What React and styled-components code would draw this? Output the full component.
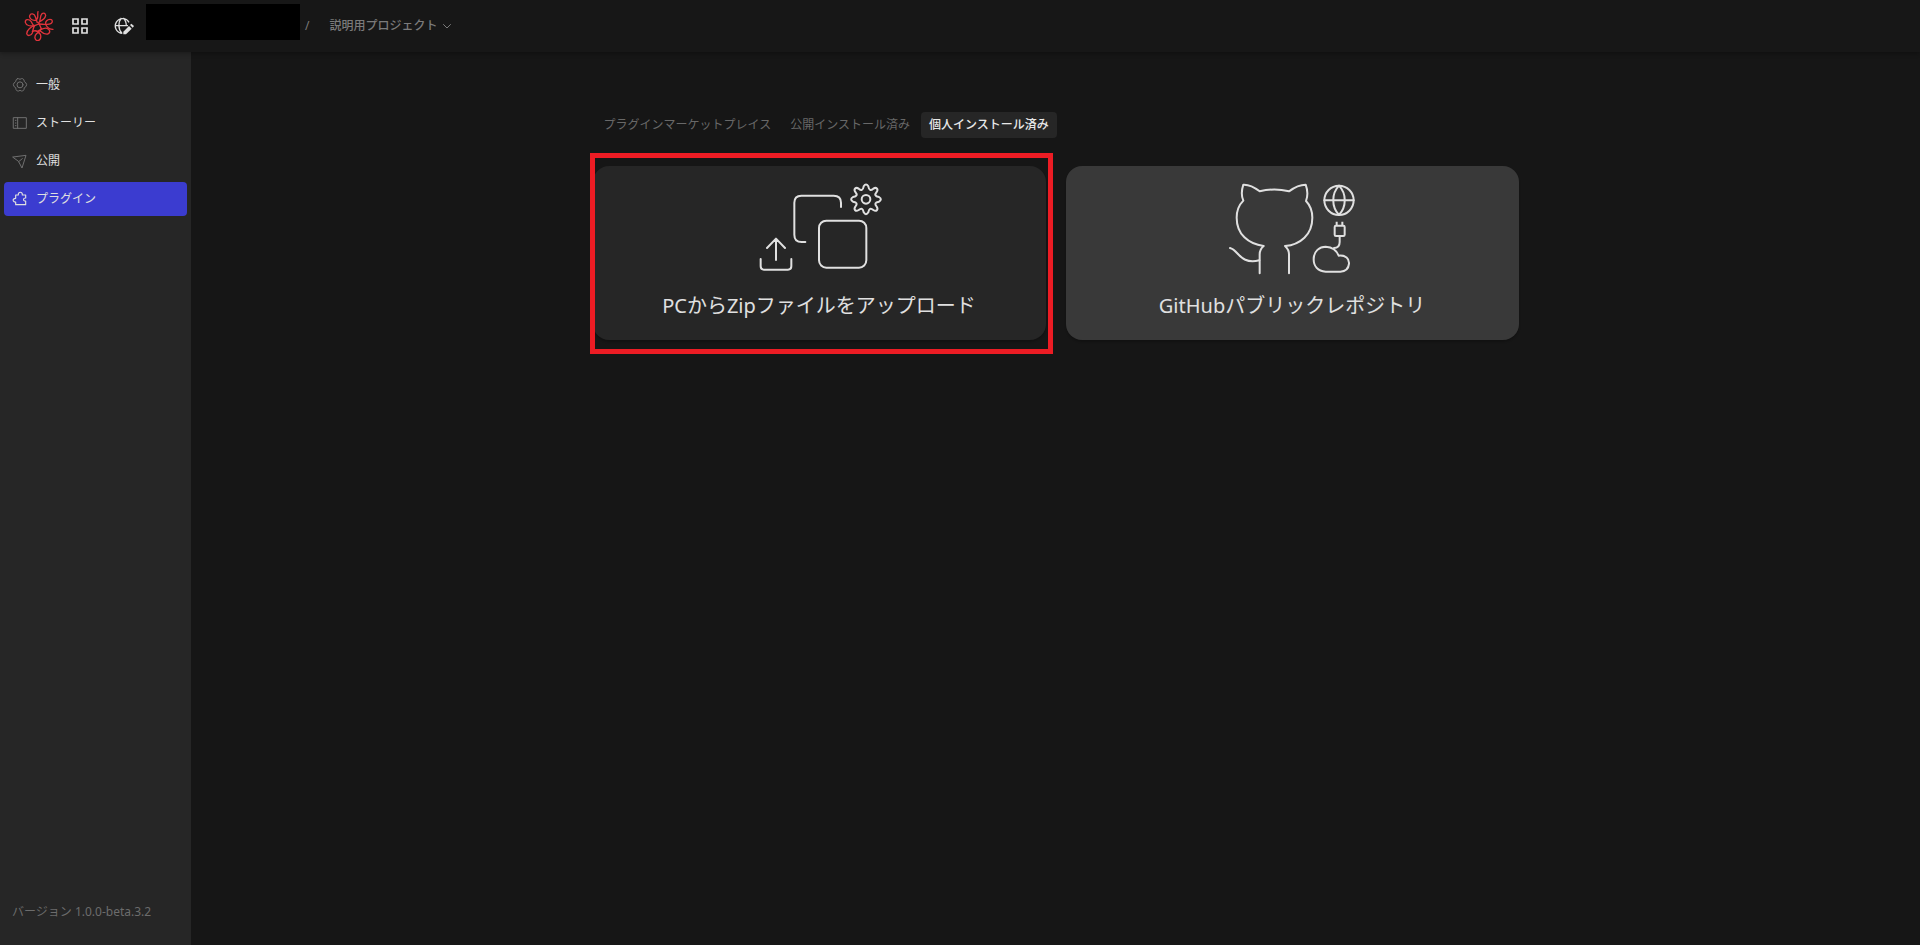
import React from "react";
import styled, { createGlobalStyle } from "styled-components";

const GlobalStyle = createGlobalStyle`
  *, *::before, *::after { box-sizing: border-box; }
  body {
    margin: 0;
    background: #161616;
    color: #e0e0e0;
    font-family: "Noto Sans", "Noto Sans CJK JP", sans-serif;
    font-size: 12px;
    line-height: 18px;
  }
  button { font: inherit; color: inherit; border: 0; background: none; padding: 0; cursor: pointer; }
  a { color: inherit; text-decoration: none; }
  svg { display: block; flex: none; }
`;

const Page = styled.div`
  min-height: 100vh;
  display: flex;
  flex-direction: column;
`;

const Header = styled.header`
  position: relative;
  z-index: 1;
  height: 52px;
  flex: none;
  display: flex;
  align-items: flex-start;
  padding-left: 24px;
  background: #171717;
  box-shadow: 0 2px 4px rgba(0, 0, 0, 0.25);
`;

const HeaderLink = styled.a`
  height: 52px;
  display: flex;
  align-items: center;
  margin-right: ${(p) => p.$gap}px;
`;

const Workspace = styled.div`
  width: 154px;
  height: 36px;
  margin-top: 4px;
  background: #000;
`;

const Crumbs = styled.nav`
  height: 52px;
  display: flex;
  align-items: center;
  gap: 20px;
  padding-left: 5px;
  color: #7b7b7b;
`;

const ProjectButton = styled.button`
  display: flex;
  align-items: center;
  gap: 5px;
  font-weight: 500;
`;

const Body = styled.div`
  flex: 1;
  display: flex;
`;

const Sidebar = styled.aside`
  width: 191px;
  flex: none;
  display: flex;
  flex-direction: column;
  justify-content: space-between;
  padding: 16px 4px 24px;
  background: #262626;
`;

const Menu = styled.nav`
  display: flex;
  flex-direction: column;
  gap: 4px;
`;

const MenuItem = styled.a`
  height: 34px;
  display: flex;
  align-items: center;
  gap: 8px;
  padding: 0 8px;
  border-radius: 4px;
  background: ${(p) => (p.$active ? "#3b3cd0" : "transparent")};
  svg { color: ${(p) => (p.$active ? "#e0e0e0" : "#707070")}; }
`;

const Version = styled.div`
  padding-left: 8px;
  color: #6c6c6c;
`;

const Main = styled.main`
  flex: 1;
  padding: 60px 24px;
`;

const Content = styled.div`
  max-width: 926px;
  margin: 0 auto;
  display: flex;
  flex-direction: column;
  gap: 28px;
`;

const Tabs = styled.div`
  display: flex;
  gap: 3px;
  padding-left: 3px;
`;

const Tab = styled.button`
  height: 26px;
  padding: 0 8px;
  border-radius: 4px;
  white-space: nowrap;
  color: ${(p) => (p.$active ? "#e8e8e8" : "#686868")};
  background: ${(p) => (p.$active ? "#262626" : "transparent")};
  font-weight: ${(p) => (p.$active ? 500 : 400)};
`;

const Cards = styled.div`
  display: grid;
  grid-template-columns: 1fr 1fr;
  gap: 20px;
`;

const CardSlot = styled.div`
  position: relative;
  display: grid;
`;

const Highlight = styled.div`
  position: absolute;
  inset: -13px -7px -14px -3px;
  border: 5px solid #ed1c24;
  pointer-events: none;
`;

const Card = styled.button`
  display: flex;
  flex-direction: column;
  align-items: center;
  gap: 16px;
  padding: 16px 16px 20px;
  border-radius: 16px;
  background: ${(p) => (p.$raised ? "#393939" : "#262626")};
  box-shadow: 0 2px 2px rgba(0, 0, 0, 0.2);
`;

const CardTitle = styled.span`
  font-size: 20px;
  line-height: 28px;
`;

const line = { fill: "none", stroke: "currentColor", strokeLinecap: "round", strokeLinejoin: "round" };

const Logo = () => (
  <svg width="30" height="30" viewBox="72 33 90 90" fill="none" stroke="#e0343c" strokeWidth="4" strokeLinecap="round" strokeLinejoin="round">
    <path d="M114 35C111 46 118 58 106 61C96 63 87 54 89 47C92 38 103 41 106 50L112 68" />
    <path d="M116 68C124 62 118 48 126 41C134 36 140 44 135 52C131 60 121 62 116 68L124 86" />
    <path d="M116 72L104 77C91 79 78 76 76 67C75 57 87 57 93 64C98 70 96 76 104 77" />
    <path d="M104 77C93 80 80 91 80 101C82 109 93 108 97 99C99 93 98 86 104 77" />
    <path d="M97 94C107 90 116 95 121 103C125 114 119 122 113 122C104 121 102 109 109 102C113 98 117 96 124 86" />
    <path d="M121 93C126 98 134 103 143 102C152 99 151 88 141 85C132 82 121 90 114 93" />
    <path d="M116 72C126 72 132 74 141 73C149 73 157 71 157 63C156 56 145 57 140 62C132 70 141 88 159 88" />
  </svg>
);

const GridIcon = () => (
  <svg width="16" height="16" viewBox="0 0 16 16" fill="none" stroke="#e0e0e0" strokeWidth="1.7">
    <path d="M1 1h5v5H1zM10 1h5v5h-5zM1 10h5v5H1zM10 10h5v5h-5z" />
  </svg>
);

const GlobeEditIcon = () => (
  <svg width="20" height="18" viewBox="342 51 60 54" fill="none" stroke="#e0e0e0" strokeWidth="4">
    <path d="M387 67A22 22 0 1 0 367 100M345 77H384M364 54C354 66 354 88 366 100M370 54Q379 63 379 78" />
    <path d="M370 95L387 78L395 86L378 103H370Z" fill="#e0e0e0" stroke="none" />
    <path d="M390 75L394 71L402 78L398 83Z" fill="#e0e0e0" stroke="none" />
  </svg>
);

const ChevronIcon = () => (
  <svg width="10" height="10" viewBox="0 0 10 10" {...line}>
    <path d="M1.500 3.500L5 7L8.500 3.500" />
  </svg>
);

const GearIcon = () => (
  <svg width="16" height="16" viewBox="0 0 48 48" {...line} strokeWidth="3">
    <path d="M16 5Q20 4 24 7Q28 4 32 5Q37 7 37 14Q43 17 44 23Q43 30 37 32Q37 39 32 42Q28 43 24 40Q20 43 16 42Q11 39 11 32Q5 30 4 23Q5 17 11 14Q11 7 16 5Z" />
    <circle cx="24" cy="23.500" r="9" />
  </svg>
);

const StoryIcon = () => (
  <svg width="16" height="16" viewBox="0 0 48 48" {...line} strokeWidth="3">
    <path d="M5 8H43V40H5ZM17 8V40M10 16H12M10 24H12M10 32H12" />
  </svg>
);

const PublishIcon = () => (
  <svg width="16" height="16" viewBox="0 0 48 48" {...line} strokeWidth="3">
    <path d="M3 12L42 7L30 45L20 26ZM20 26L31 17" />
  </svg>
);

const PluginIcon = () => (
  <svg width="16" height="16" viewBox="0 0 48 48" {...line} strokeWidth="3.500">
    <path d="M11 41V33C2 34 0 22 11 22V12H19C18 1 32 1 31 12H41V21C33 20 32 31 41 30V41Z" />
  </svg>
);

const UploadArt = () => (
  <svg width="126" height="94" viewBox="48 36 378 282" {...line} strokeWidth="6">
    <path d="M303 111V98Q303 77 281 77H184Q163 77 163 98V194Q163 216 185 216H196" />
    <rect x="237" y="152" width="142" height="141" rx="22" />
    <path d="M62 267V289Q62 299 72 299H144Q154 299 154 289V267M108 270V206M81 234L108 206L135 234" />
    <circle cx="378" cy="88" r="13" />
    <path d="M371 49Q378 38 385 49C387 61 392 63 400 56C409 50 416 57 410 66C403 74 405 79 417 81Q428 88 417 95C405 97 403 102 410 110C416 119 409 126 400 120C392 113 387 115 385 127Q378 138 371 127C369 115 364 113 356 120C347 126 340 119 346 110C353 102 351 97 339 95Q328 88 339 81C351 79 353 74 346 66C340 57 347 50 356 56C364 63 369 61 371 49Z" />
  </svg>
);

const GitHubArt = () => (
  <svg width="126" height="94" viewBox="58 36 378 282" {...line} strokeWidth="6">
    <path d="M150 310V253Q150 238 162 228C116 222 81 193 81 143Q81 112 101 92C94 76 96 59 101 44C119 43 136 53 150 64Q194 53 238 64C254 52 270 44 288 44C294 60 295 77 289 93Q308 113 308 143C308 194 272 224 226 228Q238 239 238 253V310" />
    <path d="M61 234C87 240 91 285 149 271" />
    <circle cx="388" cy="91" r="44" />
    <path d="M344 91H432M388 47C365 71 365 111 388 135C411 111 411 71 388 47Z" />
    <path d="M381 155V166M398 155V166" strokeLinecap="butt" />
    <rect x="375" y="167" width="30" height="31" rx="4" />
    <path d="M390 199V216Q390 234 373 234" />
    <path d="M387 257C408 255 419 266 418 281Q416 304 392 305H348C324 303 312 288 312 268C312 243 330 230 348 230C366 231 380 238 387 257Z" />
  </svg>
);

const menuItems = [
  { label: "一般", Icon: GearIcon },
  { label: "ストーリー", Icon: StoryIcon },
  { label: "公開", Icon: PublishIcon },
  { label: "プラグイン", Icon: PluginIcon, active: true },
];

const tabs = ["プラグインマーケットプレイス", "公開インストール済み", "個人インストール済み"];

export default function App() {
  return (
    <Page lang="ja">
      <GlobalStyle />
      <Header>
        <HeaderLink href="#" aria-label="ホーム" $gap={18}><Logo /></HeaderLink>
        <HeaderLink href="#" aria-label="ダッシュボード" $gap={26}><GridIcon /></HeaderLink>
        <HeaderLink href="#" aria-label="エディター" $gap={12}><GlobeEditIcon /></HeaderLink>
        <Workspace />
        <Crumbs>
          <span>/</span>
          <ProjectButton>説明用プロジェクト<ChevronIcon /></ProjectButton>
        </Crumbs>
      </Header>
      <Body>
        <Sidebar>
          <Menu>
            {menuItems.map(({ label, Icon, active }) => (
              <MenuItem key={label} href="#" $active={active}>
                <Icon />
                {label}
              </MenuItem>
            ))}
          </Menu>
          <Version>バージョン 1.0.0-beta.3.2</Version>
        </Sidebar>
        <Main>
          <Content>
            <Tabs>
              {tabs.map((label, i) => (
                <Tab key={label} $active={i === 2}>{label}</Tab>
              ))}
            </Tabs>
            <Cards>
              <CardSlot>
                <Card>
                  <UploadArt />
                  <CardTitle>PCからZipファイルをアップロード</CardTitle>
                </Card>
                <Highlight />
              </CardSlot>
              <CardSlot>
                <Card $raised>
                  <GitHubArt />
                  <CardTitle>GitHubパブリックレポジトリ</CardTitle>
                </Card>
              </CardSlot>
            </Cards>
          </Content>
        </Main>
      </Body>
    </Page>
  );
}
